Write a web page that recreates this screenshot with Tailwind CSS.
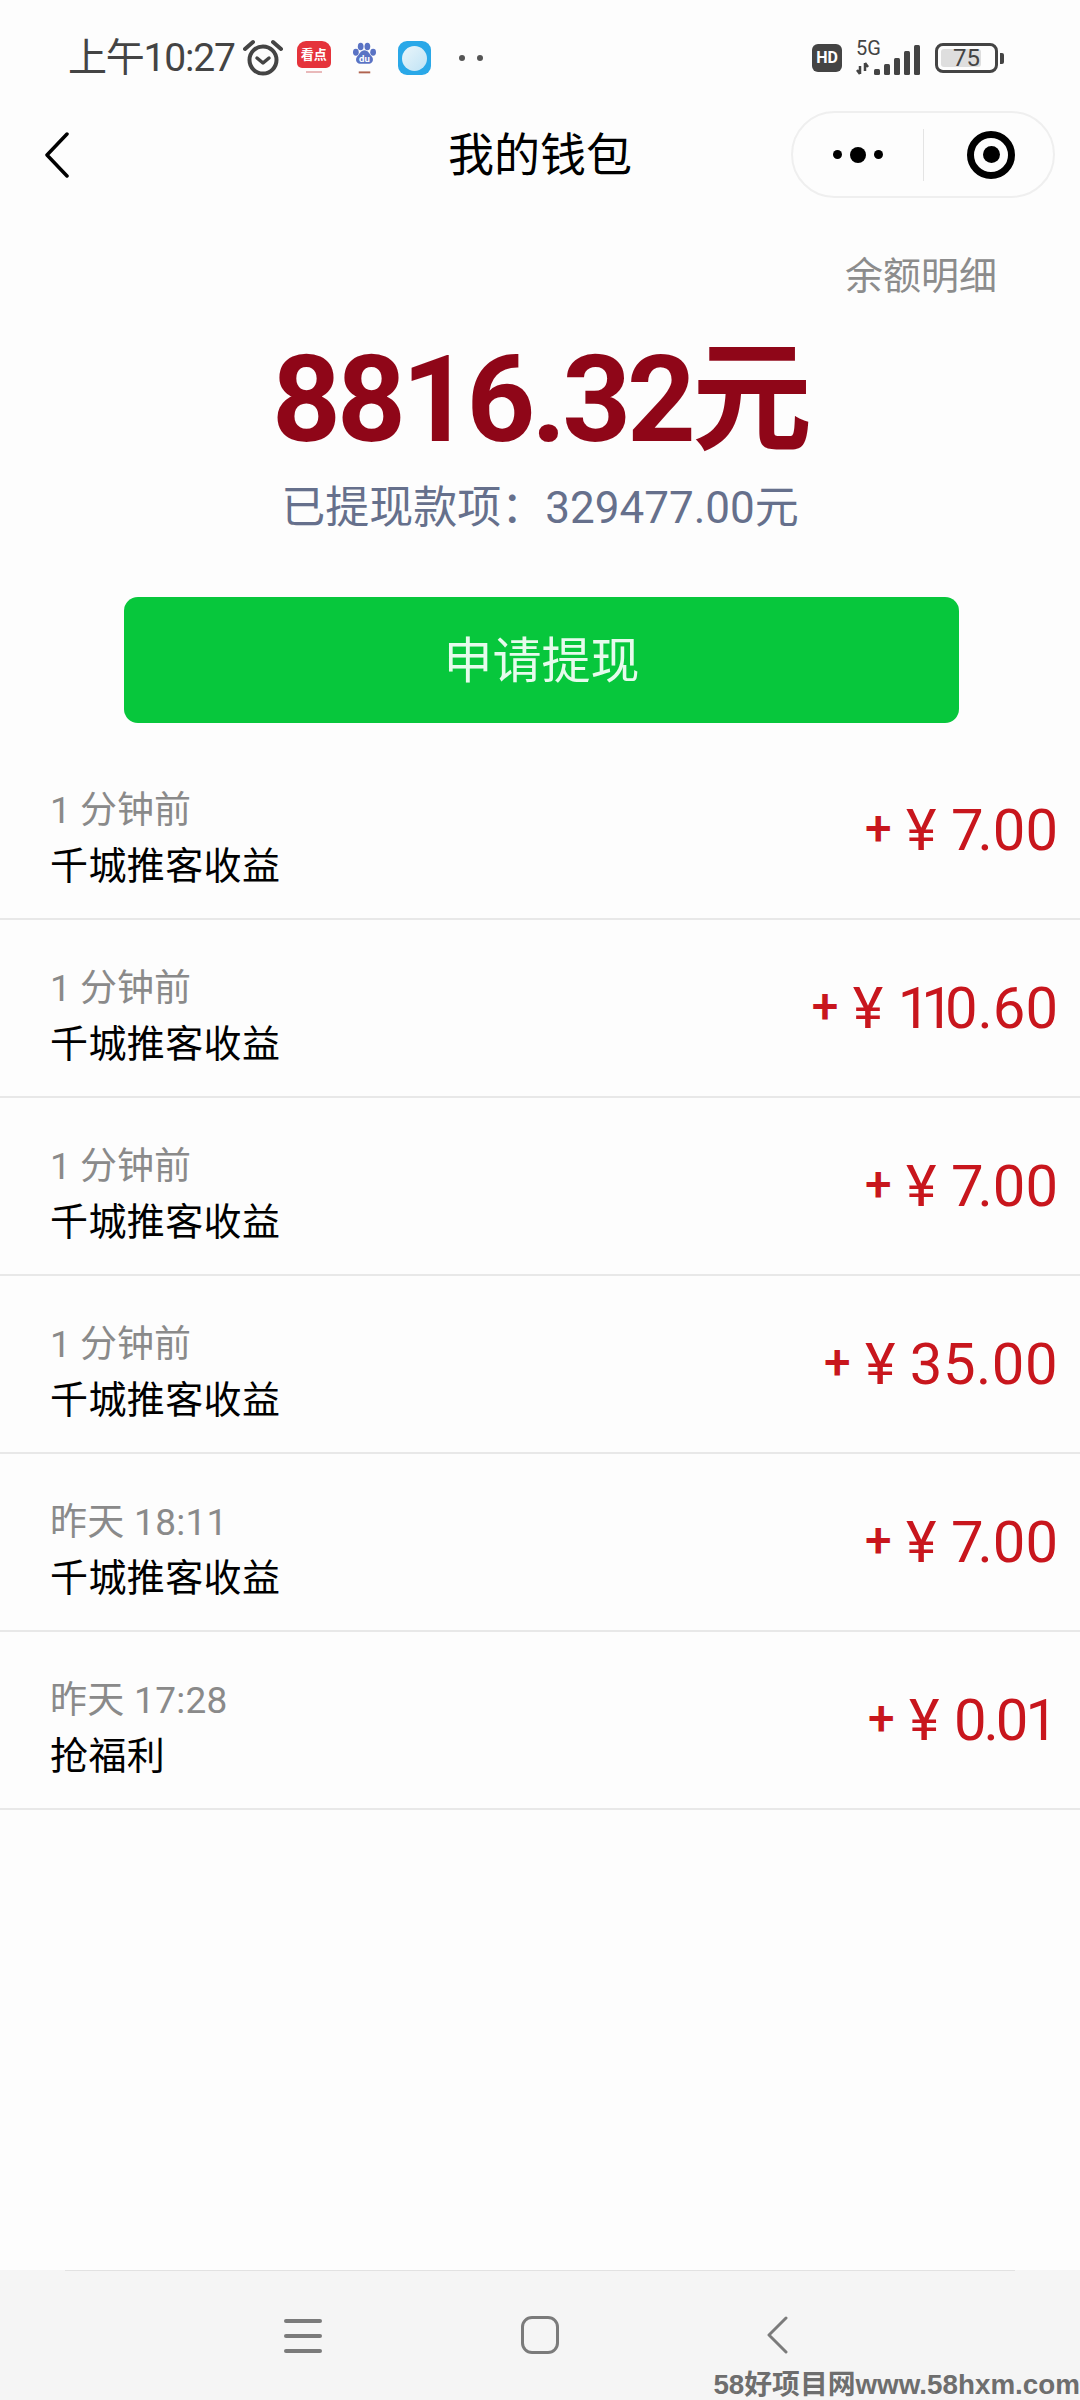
<!DOCTYPE html>
<html lang="zh-CN">
<head>
<meta charset="utf-8">
<script src="https://cdn.jsdelivr.net/npm/@tailwindcss/browser@4"></script>
</head>
<body class="m-0">
<div class="w-[1080px] h-[2400px] overflow-hidden flex flex-col bg-[#fdfdfd] font-['Roboto','Noto_Sans_CJK_SC',sans-serif]">

  <!-- status bar -->
  <div class="h-[111px] pt-[5px] pl-[68px] pr-[76px] flex items-center justify-between text-[#444]">
    <div class="flex items-center">
      <span class="text-[39px] tracking-[-1.2px] leading-none">上午10:27</span>
      <svg class="ml-[8px] w-[40px] h-[38px]" viewBox="0 0 40 38" fill="none" stroke="#444">
        <circle cx="20" cy="21" r="13.5" stroke-width="4"/>
        <path d="M14 19l6 5 6-5" stroke-width="3.5" stroke-linecap="round" stroke-linejoin="round"/>
        <path d="M2 10l8-7M38 10l-8-7" stroke-width="4" stroke-linecap="round"/>
      </svg>
      <div class="ml-[14px] w-[34px] h-[34px] flex flex-col items-center">
        <div class="w-[34px] h-[27px] rounded-t-[9px] rounded-b-[5px] bg-[#e5333b] flex items-center justify-center text-white text-[13px] font-bold leading-none whitespace-nowrap">看点</div>
        <div class="mt-[3px] w-[16px] h-[2px] bg-[#e9b9ba]"></div>
      </div>
      <svg class="ml-[22px] w-[23px] h-[34px]" viewBox="0 0 24 34">
        <g fill="#5a73c4">
          <ellipse cx="8" cy="5" rx="3" ry="4"/><ellipse cx="15" cy="5" rx="3" ry="4"/>
          <ellipse cx="3" cy="11" rx="3" ry="3.6"/><ellipse cx="21" cy="11" rx="3" ry="3.6"/>
          <path d="M12 9c4 0 5 4 8 7 2 3 0 7-3 7H7c-3 0-5-4-3-7 3-3 4-7 8-7z"/>
        </g>
        <text x="12" y="21" text-anchor="middle" font-size="10" font-weight="700" fill="#fff" font-family="Roboto">du</text>
        <rect x="6" y="31" width="12" height="2" fill="#b0634f"/>
      </svg>
      <div class="ml-[22px] w-[33px] h-[34px] rounded-[9px] bg-[#2aa8e8] flex items-center justify-center">
        <div class="w-[25px] h-[25px] rounded-full bg-linear-to-br from-[#eaf5fa] to-[#bfe3f5]"></div>
      </div>
      <div class="ml-[28px] flex gap-[12px]">
        <div class="w-[6px] h-[6px] rounded-full bg-[#555]"></div>
        <div class="w-[6px] h-[6px] rounded-full bg-[#555]"></div>
      </div>
    </div>
    <div class="flex items-center">
      <div class="w-[30px] h-[28px] rounded-[6px] bg-[#444] flex items-center justify-center text-white text-[16px] font-bold leading-none">HD</div>
      <div class="ml-[12px] w-[66px] h-[38px] relative">
        <span class="absolute left-[2px] top-[0px] text-[20px] leading-[18px] text-[#444]">5G</span>
        <svg class="w-[66px] h-[38px]" viewBox="0 0 66 38">
          <path d="M6 27v8M3 31l3 4M11 24v8M11 24l3 4" stroke="#444" stroke-width="2.500" fill="none"/>
          <rect x="20" y="30" width="6" height="6" rx="1.500" fill="#444"/>
          <rect x="30" y="25" width="6" height="11" rx="1.500" fill="#444"/>
          <rect x="40" y="19" width="6" height="17" rx="1.500" fill="#444"/>
          <rect x="50" y="12" width="6" height="24" rx="1.500" fill="#444"/>
          <rect x="60" y="6" width="6" height="30" rx="1.500" fill="#444"/>
        </svg>
      </div>
      <div class="ml-[15px] w-[63px] h-[30px] rounded-[8px] border-[3px] border-[#444] flex items-center justify-center relative">
        <div class="absolute left-[3px] top-[3px] bottom-[3px] w-[40px] rounded-[3px] bg-[#dedede]"></div>
        <span class="relative text-[24px] leading-none text-[#444]">75</span>
      </div>
      <div class="ml-[2px] w-[4px] h-[11px] rounded-r-[2px] bg-[#444]"></div>
    </div>
  </div>

  <!-- title bar -->
  <div class="h-[87px] grid grid-cols-[1fr_auto_1fr] items-center">
    <svg class="ml-[44px] w-[26px] h-[46px]" viewBox="0 0 26 46" fill="none" stroke="#000" stroke-width="3.500" stroke-linecap="round" stroke-linejoin="round">
      <path d="M23 2L3 23l20 21"/>
    </svg>
    <div class="text-[46px] leading-none text-black">我的钱包</div>
    <div class="justify-self-end mr-[25px] w-[264px] h-[87px] rounded-full border-2 border-[#efefef] flex items-center">
      <div class="w-[130px] flex items-center justify-center gap-[8px]">
        <div class="w-[9px] h-[9px] rounded-full bg-black"></div>
        <div class="w-[16px] h-[16px] rounded-full bg-black"></div>
        <div class="w-[9px] h-[9px] rounded-full bg-black"></div>
      </div>
      <div class="w-[1px] h-[52px] bg-[#e4e4e4]"></div>
      <div class="flex-1 flex items-center justify-center pl-[5px]">
        <div class="w-[48px] h-[48px] rounded-full border-[7px] border-black flex items-center justify-center">
          <div class="w-[17px] h-[17px] rounded-full bg-black"></div>
        </div>
      </div>
    </div>
  </div>

  <!-- balance -->
  <div class="mt-[55px] pr-[83px] text-right text-[38px] leading-[46px] text-[#8c8c8c]">余额明细</div>
  <div class="mt-[36px] h-[130px] flex items-center justify-center text-[#8f0618] text-[120px] font-bold leading-none tracking-[-4px]">8816.32元</div>
  <div class="mt-[18px] text-center text-[44px] leading-[50px] text-[#66708c]">已提现款项：329477.00元</div>
  <div class="mt-[64px] mx-[124px] w-[835px] h-[126px] rounded-[14px] bg-[#07c73c] flex items-center justify-center pt-[2px] text-[49px] leading-none text-[#e6fbec]">申请提现</div>

  <!-- records -->
  <div class="mt-[19px] flex flex-col">
    <div class="h-[178px] border-b-2 border-[#e8e8e8] pl-[50px] pr-[22px] flex items-center justify-between">
      <div class="flex flex-col pt-[18px]"><span class="text-[37px] leading-[54px] text-[#8a8a8a]">1 分钟前</span><span class="text-[38px] tracking-[0.4px] leading-[56px] text-black">千城推客收益</span></div>
      <div class="text-[58px] leading-none text-[#c8161d]"><span class="inline-block -translate-y-[5px] text-[48px] font-medium">+</span> ¥ <span class="tracking-[-6px]">7</span>.00</div>
    </div>
    <div class="h-[178px] border-b-2 border-[#e8e8e8] pl-[50px] pr-[22px] flex items-center justify-between">
      <div class="flex flex-col pt-[18px]"><span class="text-[37px] leading-[54px] text-[#8a8a8a]">1 分钟前</span><span class="text-[38px] tracking-[0.4px] leading-[56px] text-black">千城推客收益</span></div>
      <div class="text-[58px] leading-none text-[#c8161d]"><span class="inline-block -translate-y-[5px] text-[48px] font-medium">+</span> ¥ <span class="tracking-[-9px]">11</span>0.60</div>
    </div>
    <div class="h-[178px] border-b-2 border-[#e8e8e8] pl-[50px] pr-[22px] flex items-center justify-between">
      <div class="flex flex-col pt-[18px]"><span class="text-[37px] leading-[54px] text-[#8a8a8a]">1 分钟前</span><span class="text-[38px] tracking-[0.4px] leading-[56px] text-black">千城推客收益</span></div>
      <div class="text-[58px] leading-none text-[#c8161d]"><span class="inline-block -translate-y-[5px] text-[48px] font-medium">+</span> ¥ <span class="tracking-[-6px]">7</span>.00</div>
    </div>
    <div class="h-[178px] border-b-2 border-[#e8e8e8] pl-[50px] pr-[22px] flex items-center justify-between">
      <div class="flex flex-col pt-[18px]"><span class="text-[37px] leading-[54px] text-[#8a8a8a]">1 分钟前</span><span class="text-[38px] tracking-[0.4px] leading-[56px] text-black">千城推客收益</span></div>
      <div class="text-[58px] leading-none text-[#c8161d]"><span class="inline-block -translate-y-[5px] text-[48px] font-medium">+</span> ¥ <span class="tracking-[0.5px]">35.00</span></div>
    </div>
    <div class="h-[178px] border-b-2 border-[#e8e8e8] pl-[50px] pr-[22px] flex items-center justify-between">
      <div class="flex flex-col pt-[18px]"><span class="text-[37px] tracking-[0.3px] leading-[54px] text-[#8a8a8a]">昨天 18:11</span><span class="text-[38px] tracking-[0.4px] leading-[56px] text-black">千城推客收益</span></div>
      <div class="text-[58px] leading-none text-[#c8161d]"><span class="inline-block -translate-y-[5px] text-[48px] font-medium">+</span> ¥ <span class="tracking-[-6px]">7</span>.00</div>
    </div>
    <div class="h-[178px] border-b-2 border-[#e8e8e8] pl-[50px] pr-[22px] flex items-center justify-between">
      <div class="flex flex-col pt-[18px]"><span class="text-[37px] tracking-[0.3px] leading-[54px] text-[#8a8a8a]">昨天 17:28</span><span class="text-[38px] tracking-[0.4px] leading-[56px] text-black">抢福利</span></div>
      <div class="text-[58px] leading-none text-[#c8161d]"><span class="inline-block -translate-y-[5px] text-[48px] font-medium">+</span> ¥ <span class="tracking-[-3px]">0.0</span>1</div>
    </div>
  </div>

  <!-- bottom nav -->
  <div class="mt-auto h-[130px] bg-[#f5f5f5] relative">
    <div class="mx-[65px] h-[1px] bg-[#e2e2e2]"></div>
    <div class="pt-[45px] flex items-start">
      <div class="ml-[284px] w-[38px] flex flex-col gap-[11px] pt-[3px]">
        <div class="h-[4px] rounded-full bg-[#7b7b7b]"></div>
        <div class="h-[4px] rounded-full bg-[#7b7b7b]"></div>
        <div class="h-[4px] rounded-full bg-[#7b7b7b]"></div>
      </div>
      <div class="ml-[199px] w-[38px] h-[38px] rounded-[11px] border-[3px] border-[#7b7b7b]"></div>
      <svg class="ml-[207px] w-[22px] h-[38px]" viewBox="0 0 22 38" fill="none" stroke="#7b7b7b" stroke-width="3" stroke-linecap="round" stroke-linejoin="round"><path d="M20 2L3 19l17 17"/></svg>
    </div>
    <div class="absolute right-0 bottom-0 text-[27.8px] leading-[30px] font-bold text-[#6e6e6e] whitespace-nowrap font-['Liberation_Sans','Noto_Sans_CJK_SC',sans-serif]">58好项目网www.58hxm.com</div>
  </div>
</div>
</body>
</html>
